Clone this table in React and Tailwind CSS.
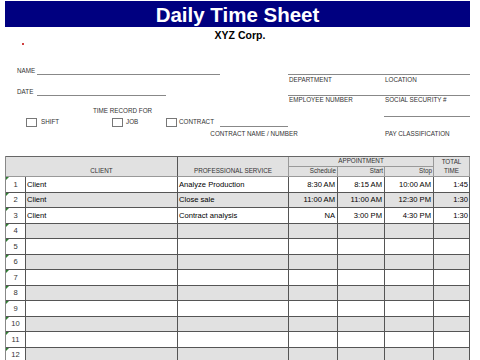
import React from "react";

const COLS = "grid grid-cols-[20px_152px_111px_49px_47px_49px_36px]";

const data = [
  ["Client", "Analyze Production", "8:30 AM", "8:15 AM", "10:00 AM", "1:45"],
  ["Client", "Close sale", "11:00 AM", "11:00 AM", "12:30 PM", "1:30"],
  ["Client", "Contract analysis", "NA", "3:00 PM", "4:30 PM", "1:30"],
];

const rows = Array.from({ length: 14 }, (_, i) => data[i] || ["", "", "", "", "", ""]);

function Lbl({ className = "", children }) {
  return (
    <span className={"text-[6.3px] leading-none text-[#333] whitespace-nowrap " + className}>
      {children}
    </span>
  );
}

function Box() {
  return <div className="h-[9px] w-[11px] flex-none border border-[#777] bg-white" />;
}

export default function App() {
  return (
    <div className="w-[480px] h-[360px] overflow-hidden bg-white font-['Liberation_Sans',Arial,sans-serif] text-black">
      {/* Title */}
      <div className="ml-[5px] mt-[1px] h-[26px] w-[465px] bg-[#000080] pt-[4px] text-center text-[20.5px] font-bold leading-none text-white">
        Daily Time Sheet
      </div>
      <div className="h-[16px] pt-[3px] text-center text-[10.5px] font-bold leading-none">XYZ Corp.</div>
      <div className="ml-[22px] h-[2px] w-[2px] rounded-full bg-[#c00000]" />

      {/* Form */}
      <div className="flex h-[111px]">
        <div className="w-[288px] flex-none">
          <div className="mt-[20px] flex h-[10px] items-end">
            <Lbl className="mb-[1px] ml-[17px] w-[20px]">NAME</Lbl>
            <div className="h-px w-[183px] bg-[#888]" />
          </div>
          <div className="mt-[11px] flex h-[10px] items-end">
            <Lbl className="mb-[1px] ml-[17px] w-[20px]">DATE</Lbl>
            <div className="h-px w-[129px] bg-[#888]" />
          </div>
          <div className="mt-[12px] h-[10px] pl-[93px]">
            <Lbl className="block">TIME RECORD FOR</Lbl>
          </div>
          <div className="flex h-[9px] items-center">
            <div className="w-[26px] flex-none" />
            <div className="flex w-[86px] flex-none items-center">
              <Box />
              <Lbl className="ml-[4px]">SHIFT</Lbl>
            </div>
            <div className="flex w-[54px] flex-none items-center">
              <Box />
              <Lbl className="ml-[3px]">JOB</Lbl>
            </div>
            <div className="flex w-[54px] flex-none items-center">
              <Box />
              <Lbl className="ml-[2px]">CONTRACT</Lbl>
            </div>
            <div className="h-px w-[68px] flex-none self-end bg-[#888]" />
          </div>
          <div className="ml-[220px] mt-[4px] flex w-[68px] justify-center whitespace-nowrap">
            <Lbl>CONTRACT NAME / NUMBER</Lbl>
          </div>
        </div>
        <div className="w-[182px] flex-none">
          <div className="mt-[29px] h-px bg-[#888]" />
          <div className="mt-[2px] flex h-[18px]">
            <Lbl className="w-[97px] pl-[1px]">DEPARTMENT</Lbl>
            <Lbl>LOCATION</Lbl>
          </div>
          <div className="h-px bg-[#888]" />
          <div className="mt-[1px] flex h-[19px]">
            <Lbl className="w-[97px] pl-[1px]">EMPLOYEE NUMBER</Lbl>
            <Lbl>SOCIAL SECURITY #</Lbl>
          </div>
          <div className="ml-[96px] h-px bg-[#888]" />
          <div className="ml-[97px] mt-[2px]">
            <Lbl>PAY CLASSIFICATION</Lbl>
          </div>
        </div>
      </div>

      {/* Table */}
      <div className="ml-[5px] w-[465px] border-l border-[#888]">
        <div className={COLS + " grid-rows-[10px_10px] border-t border-[#666] bg-[#e1e1e1] text-[6.3px] leading-none text-[#333]"}>
          <div className="col-start-1 row-span-2 row-start-1 border-b border-[#999]" />
          <div className="col-start-2 row-span-2 row-start-1 flex items-end justify-center border-b border-r border-[#999] border-r-[#555] pb-[2px]">
            CLIENT
          </div>
          <div className="col-start-3 row-span-2 row-start-1 flex items-end justify-center border-b border-r border-[#999] pb-[2px]">
            PROFESSIONAL SERVICE
          </div>
          <div className="col-span-3 col-start-4 row-start-1 flex items-center justify-center border-b border-r border-[#999]">
            APPOINTMENT
          </div>
          <div className="col-start-7 row-start-1 flex items-center justify-center border-r border-[#999]">TOTAL</div>
          <div className="col-start-4 row-start-2 flex items-center justify-end border-b border-r border-[#999] pr-[1px]">
            Schedule
          </div>
          <div className="col-start-5 row-start-2 flex items-center justify-end border-b border-r border-[#999] pr-[1px]">
            Start
          </div>
          <div className="col-start-6 row-start-2 flex items-center justify-end border-b border-r border-[#999] pr-[1px]">
            Stop
          </div>
          <div className="col-start-7 row-start-2 flex items-center justify-center border-b border-r border-[#999]">TIME</div>
        </div>
        {rows.map((r, i) => {
          const gray = i % 2 === 1;
          const bg = gray ? " bg-[#e1e1e1]" : " bg-white";
          const h = i % 2 === 0 ? " h-[16px]" : " h-[15px]";
          const cell = "flex items-center border-b border-r border-[#555] text-[7.6px] leading-none whitespace-nowrap overflow-hidden" + bg;
          return (
            <div key={i} className={COLS + h}>
              <div className="relative flex items-center justify-center border-b border-r border-[#555] bg-white text-[7.6px] leading-none text-[#333]">
                <div className="absolute left-0 top-0 h-[3px] w-[3px] bg-[#2e7d32] [clip-path:polygon(0_0,100%_0,0_100%)]" />
                {i + 1}
              </div>
              <div className={cell + " pl-[1px]"}>{r[0]}</div>
              <div className={cell + " pl-[1px]"}>{r[1]}</div>
              <div className={cell + " justify-end pr-[2px]"}>{r[2]}</div>
              <div className={cell + " justify-end pr-[2px]"}>{r[3]}</div>
              <div className={cell + " justify-end pr-[2px]"}>{r[4]}</div>
              <div className={cell + " justify-end pr-[1px]"}>{r[5]}</div>
            </div>
          );
        })}
      </div>
    </div>
  );
}
